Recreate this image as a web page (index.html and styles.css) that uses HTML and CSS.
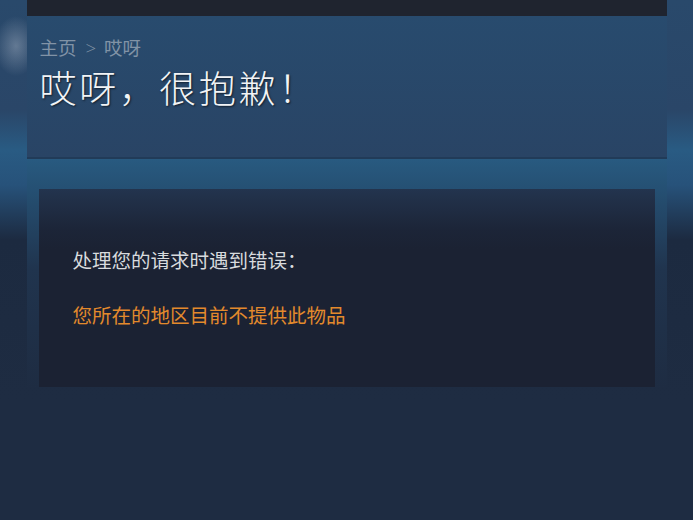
FILE: index.html
```html
<!DOCTYPE html>
<html lang="zh-CN">
<head>
    <meta charset="UTF-8">
    <meta name="viewport" content="width=device-width, initial-scale=1.0">
    <title>哎呀，很抱歉！</title>
    <link rel="stylesheet" href="styles.css">
</head>
<body>
    <div class="page">
        <div class="top-bar"></div>

        <div class="page-header">
            <div class="breadcrumbs">
                <a href="#">主页</a><span class="sep">&gt;</span><span>哎呀</span>
            </div>
            <h1 class="page-title">哎呀，很抱歉！</h1>
        </div>

        <div class="content-area">
            <div class="error-box">
                <p class="error-intro">处理您的请求时遇到错误：</p>
                <p class="error-message">您所在的地区目前不提供此物品</p>
            </div>
        </div>
    </div>
</body>
</html>
```

FILE: styles.css
```css
/* Page background */
body {
    margin: 0;
    font-family: "Noto Sans CJK SC", "Noto Sans", sans-serif;
    background-color: #1e2c42;
    background-image:
        radial-gradient(ellipse 22px 30px at 16px 46px, rgba(185, 195, 210, 0.4) 0, rgba(185, 195, 210, 0) 100%),
        linear-gradient(to bottom, #29496b 0, #2a4668 110px, #295b83 150px, #27527a 185px, #1c2a40 240px, #1e2c42 400px);
    background-repeat: no-repeat;
    min-height: 520px;
}

.page {
    width: 640px;
    margin: 0 auto;
}

.top-bar {
    height: 16px;
    background-color: #1f242f;
}

/* Header with breadcrumbs and title */
.page-header {
    height: 143px;
    padding: 20px 13px 0;
    box-sizing: border-box;
    background: linear-gradient(to bottom, #284b6e, #294465);
    border-bottom: 2px solid #213b58;
}

.breadcrumbs {
    font-size: 18.5px;
    line-height: 22px;
    color: #8193a6;
}

.breadcrumbs a {
    color: #8193a6;
    text-decoration: none;
}

.breadcrumbs .sep {
    margin: 0 8px 0 9px;
    font-family: "Open Sans", sans-serif;
    font-weight: 300;
}

.page-title {
    margin: 6px 0 0;
    font-size: 37px;
    line-height: 44px;
    font-weight: 300;
    color: #f2f4f6;
    letter-spacing: 2.8px;
    text-shadow: 1px 1px 2px rgba(0, 0, 0, 0.6);
}

/* Error content */
.content-area {
    padding: 30px 12px 0;
    background: linear-gradient(to bottom, #285a80 0, #255073 30px, #20344e 110px, #1e2c42 230px);
}

.error-box {
    padding: 58px 34px 59px;
    background: linear-gradient(to bottom, #23344e 0, #1c2538 40px, #1b2233 60px);
}

.error-box p {
    margin: 0;
    font-size: 19.5px;
    line-height: 26px;
}

.error-intro {
    color: #d8dbde;
}

.error-message {
    margin-top: 29px !important;
    color: #e38a2c;
}
```
